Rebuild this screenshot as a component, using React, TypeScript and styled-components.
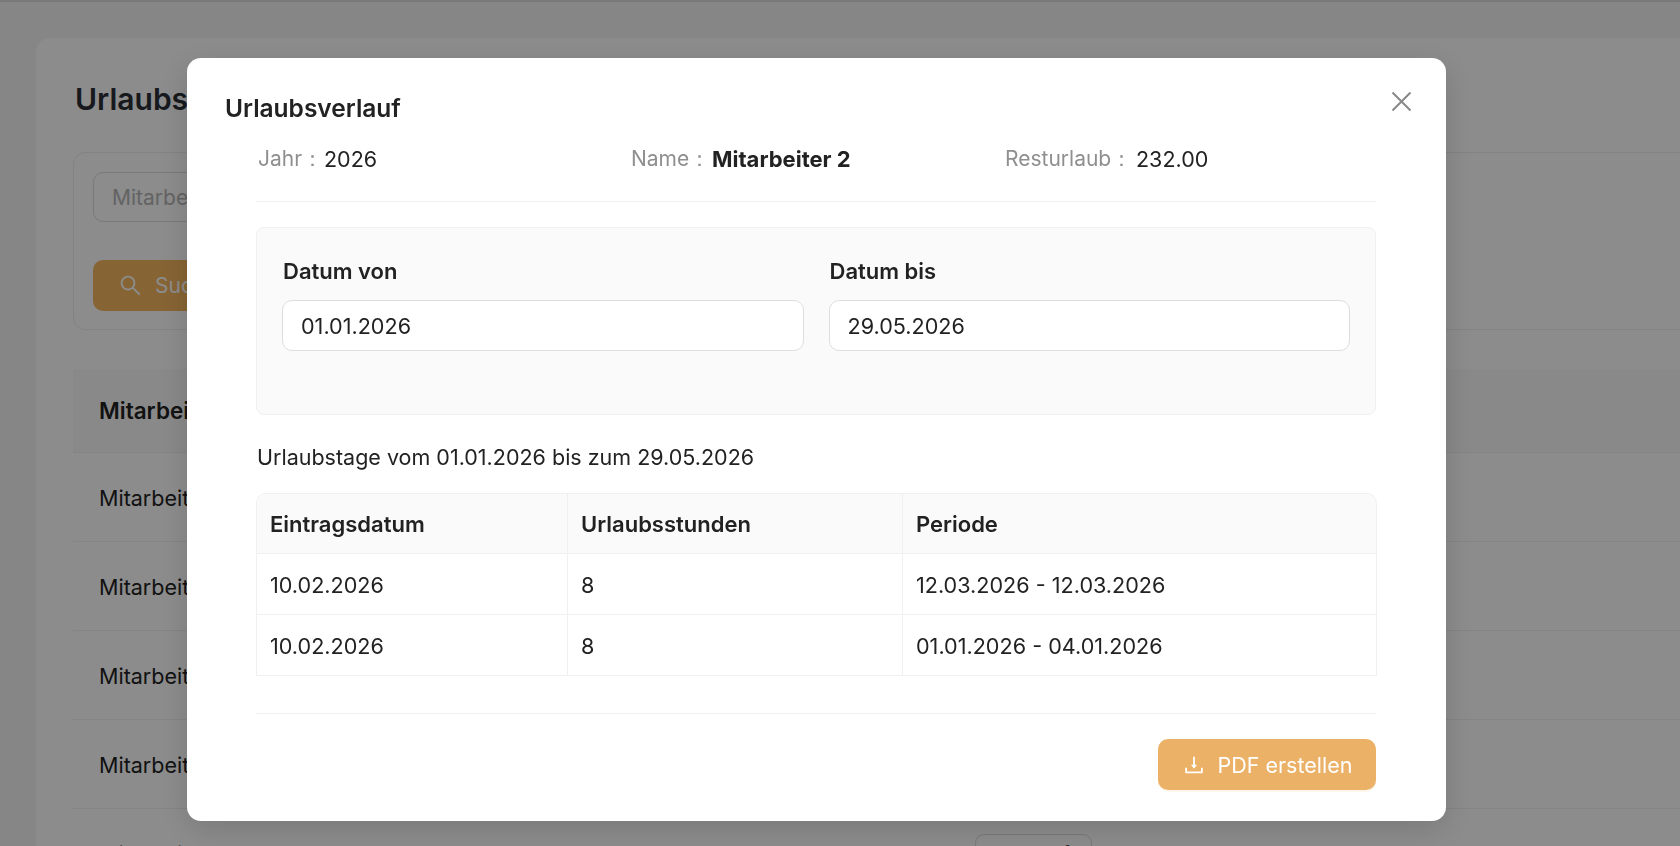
import React from "react";
import styled, { createGlobalStyle } from "styled-components";
import { AiOutlineDownload, AiOutlineSearch } from "react-icons/ai";

const Global = createGlobalStyle`
  html, body { margin: 0; padding: 0; height: 100%; overflow: hidden; background: #f4f4f4; }
  body { font-family: Inter, "Liberation Sans", sans-serif; color: #222; }
  * { box-sizing: border-box; }
`;

const Page = styled.div`
  width: 1680px; height: 846px; overflow: hidden; padding: 38px 0 0 36px;
  border-top: 2px solid #dcdcdc;
`;
const Card = styled.main`
  width: 1720px; height: 900px; margin-top: -2px; background: #fff; border-radius: 14px 0 0 0; padding: 38px 37px 0;
`;
const PageTitle = styled.h1`
  margin: 0 0 0 2px; height: 38px; font-size: 30px; line-height: 46px; font-weight: 600; color: #2a2f36;
`;
const SearchPanel = styled.section`
  margin-top: 38px; height: 178px; border: 1px solid #eee; border-radius: 12px; padding: 19px;
`;
const SearchInput = styled.div`
  width: 300px; height: 50px; padding: 0 18px; border: 1px solid #dcdcdc; border-radius: 10px;
  display: flex; align-items: center; font-size: 21px; color: #b5b5b5;
`;
const SearchButton = styled.div`
  margin-top: 38px; width: 180px; height: 51px; padding: 0 25px; gap: 12px; border-radius: 10px; background: #f5b65e;
  display: flex; align-items: center; color: #fff; font-size: 21px;
`;
const BackRow = styled.div<{ $head?: boolean }>`
  display: flex; align-items: center; padding: ${p => (p.$head ? "0" : "2px")} 26px 0; border-bottom: 1px solid #f0f0f0;
  height: ${p => (p.$head ? "84px" : "89px")}; font-size: ${p => (p.$head ? "22.5px" : "21.5px")};
  font-weight: ${p => (p.$head ? 600 : 400)};
  background: ${p => (p.$head ? "#fafafa" : "transparent")};
`;
const BackName = styled.span`width: 876px;`;
const BackAction = styled.span`
  width: 117px; height: 40px; border: 1px solid #ddd; border-radius: 9px;
  display: flex; align-items: center; justify-content: center;
`;
const BackTable = styled.section`margin-top: 39px;`;

const Overlay = styled.div`
  position: fixed; inset: 0; background: rgba(0,0,0,.45); padding: 58px 0 0 187px;
`;
const Modal = styled.div`
  position: relative; width: 1259px; height: 763px; background: #fff; border-radius: 14px;
  padding: 34px 70px 0 69px; box-shadow: 0 8px 32px rgba(0,0,0,.15);
`;
const ModalTitle = styled.h2`
  margin: 0 0 0 -31px; font-size: 24.5px; line-height: 32px; font-weight: 600; color: #222;
`;
const CloseButton = styled.button`
  position: absolute; top: 32px; right: 34px; width: 22px; height: 22px; padding: 0;
  border: 0; background: none; color: #888; display: flex; align-items: center; justify-content: center;
`;
const InfoRow = styled.div`
  margin-top: 19px; padding: 0 2px 26px; border-bottom: 1px solid #efefef;
  display: grid; grid-template-columns: 373px 374px 1fr; font-size: 21px; line-height: 32px;
`;
const InfoItem = styled.div`display: flex;`;
const InfoLabel = styled.span`color: #8f8f8f; width: ${(p: { $w: number }) => p.$w}px;`;
const InfoValue = styled.span<{ $bold?: boolean }>`
  font-size: ${p => (p.$bold ? "22px" : "21.5px")};
  font-weight: ${p => (p.$bold ? 700 : 400)}; color: #222;
`;
const Filter = styled.section`
  margin-top: 25px; height: 188px; background: #fafafa; border: 1px solid #f0f0f0; border-radius: 8px;
  padding: 28px 25px 0 25px; display: grid; grid-template-columns: 1fr 1fr; column-gap: 25px; align-items: start;
`;
const Field = styled.div``;
const Label = styled.div`padding-left: 1px; font-size: 22px; line-height: 30px; font-weight: 600; color: #222;`;
const DateInput = styled.div`
  margin-top: 14px; height: 51px; padding: 0 18px; background: #fff; border: 1px solid #dedede; border-radius: 10px;
  display: flex; align-items: center; font-size: 21.6px; color: #222;
`;
const Summary = styled.p`
  margin: 27px 0 0; padding-left: 1px; font-size: 21.5px; line-height: 30px; color: #222;
`;
const Table = styled.table`
  margin-top: 21px; width: 1120px; border-collapse: separate; border-spacing: 0; table-layout: fixed;
  border-top: 1px solid #f0f0f0; border-left: 1px solid #f0f0f0; border-radius: 10px 10px 0 0;
`;
const Th = styled.th<{ $w: number }>`
  width: ${p => p.$w}px; height: 60px; padding: 0 13px; text-align: left; background: #fafafa;
  font-size: 22px; font-weight: 600; color: #222;
  border-right: 1px solid #f0f0f0; border-bottom: 1px solid #f0f0f0;
  &:first-child { border-top-left-radius: 10px; }
  &:last-child { border-top-right-radius: 10px; }
`;
const Td = styled.td`
  height: 61px; padding: 1px 13px 0; font-size: 21.6px; color: #222;
  border-right: 1px solid #f0f0f0; border-bottom: 1px solid #f0f0f0;
`;
const Footer = styled.div`
  margin-top: 37px; padding-top: 25px; border-top: 1px solid #efefef; display: flex; justify-content: flex-end;
`;
const PdfButton = styled.button`
  width: 218px; height: 51px; padding: 0; border: 0; border-radius: 10px; background: #ebb166; color: #fff;
  display: flex; align-items: center; justify-content: center; gap: 12px;
  font-family: inherit; font-size: 21.5px; box-shadow: 0 2px 0 rgba(240,170,70,.1);
`;

const rows = [
  ["10.02.2026", "8", "12.03.2026 - 12.03.2026"],
  ["10.02.2026", "8", "01.01.2026 - 04.01.2026"],
];

export default function App() {
  return (
    <>
      <Global />
      <Page>
        <Card>
          <PageTitle>Urlaubskonto</PageTitle>
          <SearchPanel>
            <SearchInput>Mitarbeiter</SearchInput>
            <SearchButton>
              <AiOutlineSearch size={25} />
              Suchen
            </SearchButton>
          </SearchPanel>
          <BackTable>
            <BackRow $head><BackName>Mitarbeiter</BackName></BackRow>
            <BackRow><BackName>Mitarbeiter 1</BackName></BackRow>
            <BackRow><BackName>Mitarbeiter 2</BackName></BackRow>
            <BackRow><BackName>Mitarbeiter 3</BackName></BackRow>
            <BackRow><BackName>Mitarbeiter 4</BackName></BackRow>
            <BackRow><BackName>Mitarbeiter 5</BackName><BackAction>Verlauf</BackAction></BackRow>
          </BackTable>
        </Card>
      </Page>
      <Overlay>
        <Modal>
          <ModalTitle>Urlaubsverlauf</ModalTitle>
          <CloseButton aria-label="Schließen">
            <svg width="21" height="21" viewBox="0 0 21 21" fill="none" stroke="currentColor" strokeWidth="2">
              <path d="M1.5 1.5L19.5 19.5M19.5 1.5L1.5 19.5" />
            </svg>
          </CloseButton>
          <InfoRow>
            <InfoItem><InfoLabel $w={66}>Jahr：</InfoLabel><InfoValue>2026</InfoValue></InfoItem>
            <InfoItem><InfoLabel $w={81}>Name：</InfoLabel><InfoValue $bold>Mitarbeiter 2</InfoValue></InfoItem>
            <InfoItem><InfoLabel $w={131}>Resturlaub：</InfoLabel><InfoValue>232.00</InfoValue></InfoItem>
          </InfoRow>
          <Filter>
            <Field>
              <Label>Datum von</Label>
              <DateInput>01.01.2026</DateInput>
            </Field>
            <Field>
              <Label>Datum bis</Label>
              <DateInput>29.05.2026</DateInput>
            </Field>
          </Filter>
          <Summary>Urlaubstage vom 01.01.2026 bis zum 29.05.2026</Summary>
          <Table>
            <thead>
              <tr>
                <Th $w={311}>Eintragsdatum</Th>
                <Th $w={335}>Urlaubsstunden</Th>
                <Th $w={474}>Periode</Th>
              </tr>
            </thead>
            <tbody>
              {rows.map((r, i) => (
                <tr key={i}>
                  {r.map((c, j) => <Td key={j}>{c}</Td>)}
                </tr>
              ))}
            </tbody>
          </Table>
          <Footer>
            <PdfButton>
              <AiOutlineDownload size={24} />
              PDF erstellen
            </PdfButton>
          </Footer>
        </Modal>
      </Overlay>
    </>
  );
}
